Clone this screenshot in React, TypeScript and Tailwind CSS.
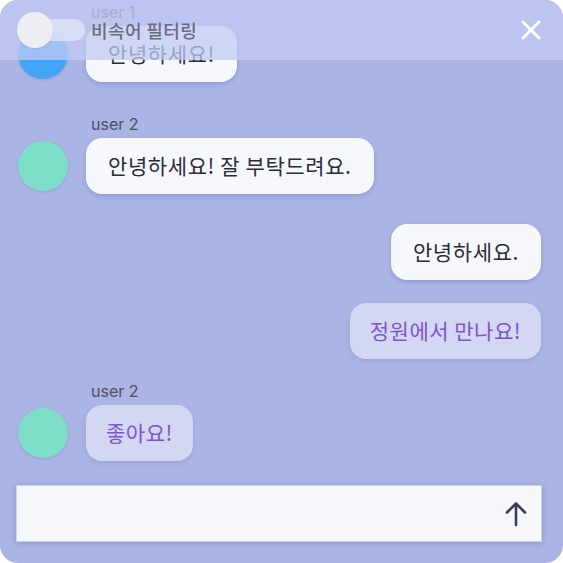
type Msg = {
  side: 'left' | 'right'
  user?: string
  avatar?: string
  text: string
  tone: 'plain' | 'soft'
  gap: string
}

const messages: Msg[] = [
  { side: 'left', user: 'user 1', avatar: 'bg-[#42a5f5]', text: '안녕하세요!', tone: 'plain', gap: 'mt-0' },
  { side: 'left', user: 'user 2', avatar: 'bg-[#7ddfc8]', text: '안녕하세요! 잘 부탁드려요.', tone: 'plain', gap: 'mt-[30px]' },
  { side: 'right', text: '안녕하세요.', tone: 'plain', gap: 'mt-[30px]' },
  { side: 'right', text: '정원에서 만나요!', tone: 'soft', gap: 'mt-[23px]' },
  { side: 'left', user: 'user 2', avatar: 'bg-[#7ddfc8]', text: '좋아요!', tone: 'soft', gap: 'mt-[20px]' },
]

function Bubble({ text, tone }: { text: string; tone: Msg['tone'] }) {
  return (
    <div
      className={
        tone === 'plain'
          ? 'h-[56px] px-[22px] rounded-[16px] flex items-center bg-[#f7f8fc] text-[#2a2c3b] text-[21px] tracking-[0.6px] shadow-[0_2px_4px_rgba(40,50,110,0.2)] whitespace-nowrap'
          : 'h-[56px] px-[20px] rounded-[16px] flex items-center bg-[#d3d7f1] text-[#7e55cf] text-[21px] tracking-[0.5px] shadow-[0_2px_4px_rgba(40,50,110,0.12)] whitespace-nowrap'
      }
    >
      {text}
    </div>
  )
}

function Message({ msg }: { msg: Msg }) {
  if (msg.side === 'right') {
    return (
      <div className={`flex justify-end ${msg.gap}`}>
        <Bubble text={msg.text} tone={msg.tone} />
      </div>
    )
  }
  return (
    <div className={`flex flex-col ${msg.gap}`}>
      <div className="ml-[73px] h-6 leading-6 text-[16px] text-[#4e5063] font-['Inter',sans-serif]">
        {msg.user}
      </div>
      <div className="flex items-center gap-[18px] mt-[2px]">
        <div
          className={`w-[50px] h-[50px] rounded-full shrink-0 shadow-[0_1px_3px_rgba(40,50,110,0.15)] ${msg.avatar}`}
        />
        <Bubble text={msg.text} tone={msg.tone} />
      </div>
    </div>
  )
}

export default function App() {
  return (
    <div className="w-[563px] h-[563px] bg-white">
      <div className="relative w-full h-full rounded-[18px] overflow-hidden bg-[#aab4e5] flex flex-col font-['Noto_Sans_CJK_KR','Noto_Sans',sans-serif]">
        <div className="flex flex-col pl-[18px] pr-[22px]">
          {messages.map((m, i) => (
            <Message key={i} msg={m} />
          ))}
        </div>

        <div className="mt-[24px] pl-4 pr-[21px]">
          <div className="h-[57px] bg-[#f7f8fc] border border-[#cdd2ec] shadow-[0_1px_6px_rgba(40,50,110,0.25)] flex items-center justify-end pr-[14px]">
            <svg viewBox="0 0 22 26" className="w-[22px] h-[26px]" fill="none" stroke="#3a3e5c" strokeWidth="2.6" strokeLinecap="round" strokeLinejoin="round">
              <path d="M11 24 V3 M2 11.5 L11 2.5 L20 11.5" />
            </svg>
          </div>
        </div>

        {/* header floats over the scrolled chat */}
        <div className="absolute top-0 inset-x-0 h-[60px] bg-[rgba(194,201,241,0.75)] flex items-center pl-[17px] pr-[21px]">
          <div className="relative w-[68px] h-[36px] flex items-center">
            <div className="absolute left-[12px] right-0 h-[22px] rounded-full bg-[rgba(225,229,248,0.75)]" />
            <div className="relative w-[36px] h-[36px] rounded-full bg-[#eeeff4] shadow-[0_1px_2px_rgba(0,0,0,0.08)]" />
          </div>
          <span className="ml-[6px] text-[18px] tracking-[0.4px] font-medium text-[#6a6c7f]">비속어 필터링</span>
          <button className="ml-auto w-[22px] h-[22px] flex items-center justify-center">
            <svg viewBox="0 0 20 20" className="w-[20px] h-[20px]" fill="none" stroke="white" strokeWidth="3" strokeLinecap="round">
              <path d="M2 2 L18 18 M18 2 L2 18" />
            </svg>
          </button>
        </div>
      </div>
    </div>
  )
}
